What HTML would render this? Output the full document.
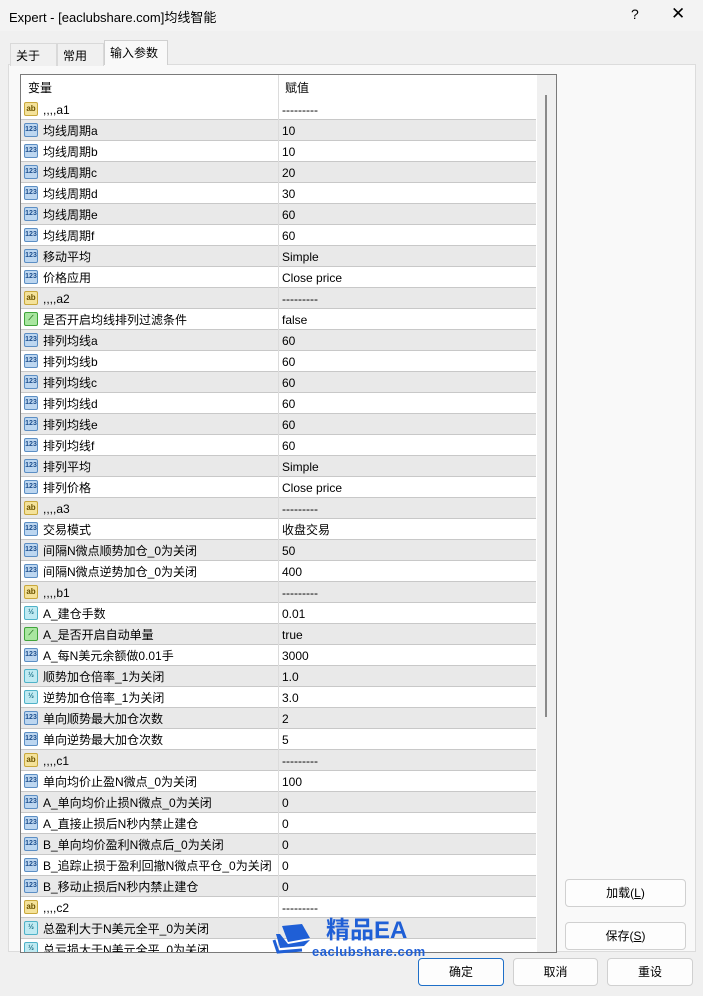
<!DOCTYPE html>
<html><head><meta charset="utf-8"><style>
*{margin:0;padding:0;box-sizing:border-box}
body{width:703px;height:996px;background:#f0f0f0;font-family:"Liberation Sans","Noto Sans CJK SC",sans-serif;font-size:12px;color:#000;position:relative;overflow:hidden}
.title{position:absolute;left:0;top:0;width:703px;height:31px;background:#f3f3f3;}
.title .t{position:absolute;left:9px;top:7px;font-size:13px}
.title .q{position:absolute;left:631px;top:6px;font-size:14px}
.title .x{position:absolute;left:671px;top:4px;font-size:17px;font-weight:300}
.tab{position:absolute;top:42px;height:23px;border:1px solid #d9d9d9;border-bottom:none;background:#f0f0f0;padding:3px 5px;font-size:12px}
.panel{position:absolute;left:8px;top:64px;width:688px;height:888px;background:#f9f9f9;border:1px solid #dcdcdc}
.list{position:absolute;left:20px;top:74px;width:537px;height:879px;border:1px solid #7a7a7a;background:#fff;overflow:hidden}
.hdr{position:absolute;left:0;top:0;width:515px;height:24px;background:#fff}
.hdr span{position:absolute;top:6px;line-height:14px}
.vline{position:absolute;left:257px;top:0;width:1px;height:900px;background:#dcdcdc}
.row{position:absolute;left:0;width:515px;height:21px;border-bottom:1px solid #c8c8c8}
.row.g{background:#e9e9e9}
.row .n,.row .v{position:absolute;top:4px;height:14px;line-height:14px;white-space:nowrap;display:flex;align-items:center}
.row .n{left:22px}
.row .v{left:261px}
.ic{position:absolute;left:3px;top:3px;width:14px;height:14px;border-radius:2px;font-size:7px;font-weight:bold;text-align:center;line-height:12px}
.ab{background:#f4e29a;border:1px solid #c9a83c;color:#6b5300;font-size:8px}
.nm{background:#bcd6f0;border:1px solid #5b8ec4;color:#1d4e8c}
.fr{background:#bfeaf2;border:1px solid #4fb2c8;color:#1c6f84}
.bo{background:#a9e6a0;border:1px solid #3fa43a;color:#1e6a1a}
.sb{position:absolute;left:516px;top:0;width:20px;height:879px;background:#f0f0f0}
.thumb{position:absolute;left:8px;top:20px;width:2px;height:622px;background:#8a8a8a}
.btn{position:absolute;height:28px;border:1px solid #d0d0d0;border-radius:4px;background:#fdfdfd;text-align:center;line-height:26px;font-size:12px}
.logo{position:absolute;left:270px;top:918px}
</style></head><body>
<div class="title"><span class="t">Expert - [eaclubshare.com]均线智能</span><span class="q">?</span><span class="x">✕</span></div>
<div class="panel"></div>
<div class="tab" style="left:10px;width:47px;top:43px">关于</div>
<div class="tab" style="left:57px;width:47px;top:43px">常用</div>
<div class="tab" style="left:104px;width:64px;top:40px;height:25px;background:#f9f9f9;border-color:#d0d0d0;padding-top:3px">输入参数</div>
<div class="list">
<div class="hdr"><span style="left:7px">变量</span><span style="left:264px">赋值</span></div>
<div id="rows"></div>
<div class="vline"></div>
<div class="sb"><div class="thumb"></div></div>
</div>
<div class="btn" style="left:565px;top:879px;width:121px">加载(<u>L</u>)</div>
<div class="btn" style="left:565px;top:922px;width:121px">保存(<u>S</u>)</div>
<div class="btn" style="left:418px;top:958px;width:86px;border-color:#1e6fc8">确定</div>
<div class="btn" style="left:513px;top:958px;width:85px">取消</div>
<div class="btn" style="left:607px;top:958px;width:86px">重设</div>
<div class="logo">
<svg width="50" height="40" viewBox="0 0 50 40" style="position:absolute;left:0;top:2px"><path d="M12 6 L32 4 L40 18 L18 22 Z" fill="#1f5fd6"/><path d="M6 14 L10 28 L34 26 L40 20 L18 24 L10 14 Z" fill="#1f5fd6"/><path d="M4 20 L8 32 L32 30" stroke="#1f5fd6" stroke-width="3" fill="none"/></svg>
<div style="position:absolute;left:56px;top:-2px;font-size:24px;line-height:30px;font-weight:bold;color:#1f5fd6;white-space:nowrap">精品EA</div>
<div style="position:absolute;left:42px;top:26px;font-size:13px;line-height:15px;font-weight:bold;color:#1f5fd6;white-space:nowrap;letter-spacing:0.5px">eaclubshare.com</div>
</div>
<script>
var R=[["ab",",,,,a1","---------"],["nm","均线周期a","10"],["nm","均线周期b","10"],["nm","均线周期c","20"],["nm","均线周期d","30"],["nm","均线周期e","60"],["nm","均线周期f","60"],["nm","移动平均","Simple"],["nm","价格应用","Close price"],["ab",",,,,a2","---------"],["bo","是否开启均线排列过滤条件","false"],["nm","排列均线a","60"],["nm","排列均线b","60"],["nm","排列均线c","60"],["nm","排列均线d","60"],["nm","排列均线e","60"],["nm","排列均线f","60"],["nm","排列平均","Simple"],["nm","排列价格","Close price"],["ab",",,,,a3","---------"],["nm","交易模式","收盘交易"],["nm","间隔N微点顺势加仓_0为关闭","50"],["nm","间隔N微点逆势加仓_0为关闭","400"],["ab",",,,,b1","---------"],["fr","A_建仓手数","0.01"],["bo","A_是否开启自动单量","true"],["nm","A_每N美元余额做0.01手","3000"],["fr","顺势加仓倍率_1为关闭","1.0"],["fr","逆势加仓倍率_1为关闭","3.0"],["nm","单向顺势最大加仓次数","2"],["nm","单向逆势最大加仓次数","5"],["ab",",,,,c1","---------"],["nm","单向均价止盈N微点_0为关闭","100"],["nm","A_单向均价止损N微点_0为关闭","0"],["nm","A_直接止损后N秒内禁止建仓","0"],["nm","B_单向均价盈利N微点后_0为关闭","0"],["nm","B_追踪止损于盈利回撤N微点平仓_0为关闭","0"],["nm","B_移动止损后N秒内禁止建仓","0"],["ab",",,,,c2","---------"],["fr","总盈利大于N美元全平_0为关闭",""],["fr","总亏损大于N美元全平_0为关闭",""]];
var L={ab:"ab",nm:"123",fr:"½",bo:"⟋"};var h="";
R.forEach(function(r,i){h+='<div class="row'+(i%2?' g':'')+'" style="top:'+(24+21*i)+'px"><div class="ic '+r[0]+'">'+L[r[0]]+'</div><span class="n">'+r[1]+'</span><span class="v">'+r[2]+'</span></div>';});
document.getElementById("rows").innerHTML=h;
</script>
</body></html>
